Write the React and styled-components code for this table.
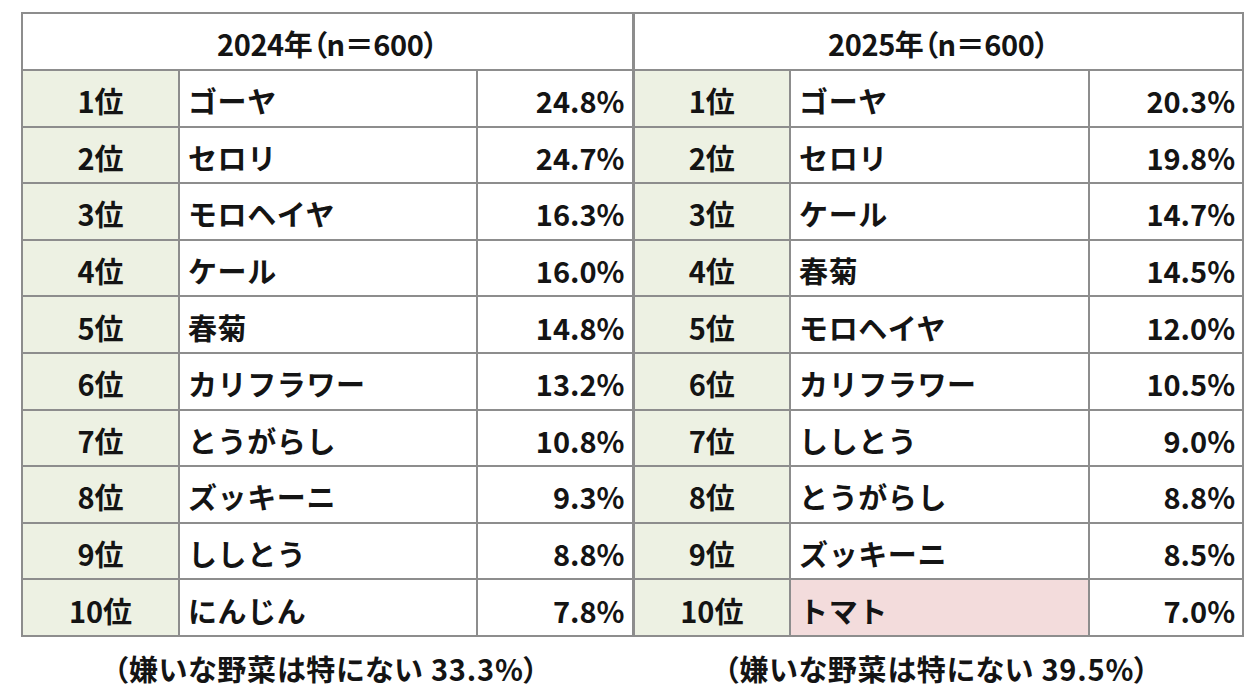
import React from "react";
import styled, { createGlobalStyle } from "styled-components";

const Global = createGlobalStyle`
  html, body { margin: 0; padding: 0; background: #ffffff; }
  body { font-family: "Noto Sans CJK JP", "Noto Sans", sans-serif; color: #141414; }
`;

const Page = styled.div`
  padding: 12px 0 0 21px;
  width: 1221px;
`;

const Table = styled.table`
  border-collapse: collapse;
  table-layout: fixed;
  width: 1221px;
  font-size: 29px;
  font-weight: 700;
  line-height: 1;
  font-feature-settings: "palt";
`;

const HeadCell = styled.th`
  height: 51px;
  padding: 4px 0 0;
  border: 2px solid #8d8d8d;
  border-left-width: ${(p) => (p.$divider ? "3px" : "2px")};
  font-weight: 700;
  text-align: center;
  letter-spacing: -0.4px;
  background: #ffffff;
`;

const Cell = styled.td`
  height: 49.6px;
  padding: 5px ${(p) => (p.$align === "right" ? "7px" : "0")} 0 ${(p) => (p.$align === "left" ? "8px" : "0")};
  border: 2px solid #8d8d8d;
  border-left-width: ${(p) => (p.$divider ? "3px" : "2px")};
  text-align: ${(p) => p.$align};
  background: ${(p) => p.$bg};
  white-space: nowrap;
`;

const Name = styled.span`
  font-feature-settings: normal;
  letter-spacing: 0.6px;
`;

const Footer = styled.div`
  display: flex;
  margin-top: 13px;
`;

const Note = styled.div`
  width: 611px;
  text-align: center;
  font-size: 29px;
  font-weight: 700;
  line-height: 36px;
  letter-spacing: 0.8px;
  font-feature-settings: "palt";
`;

const y2024 = [
  ["ゴーヤ", "24.8%"],
  ["セロリ", "24.7%"],
  ["モロヘイヤ", "16.3%"],
  ["ケール", "16.0%"],
  ["春菊", "14.8%"],
  ["カリフラワー", "13.2%"],
  ["とうがらし", "10.8%"],
  ["ズッキーニ", "9.3%"],
  ["ししとう", "8.8%"],
  ["にんじん", "7.8%"],
];

const y2025 = [
  ["ゴーヤ", "20.3%"],
  ["セロリ", "19.8%"],
  ["ケール", "14.7%"],
  ["春菊", "14.5%"],
  ["モロヘイヤ", "12.0%"],
  ["カリフラワー", "10.5%"],
  ["ししとう", "9.0%"],
  ["とうがらし", "8.8%"],
  ["ズッキーニ", "8.5%"],
  ["トマト", "7.0%", true],
];

const GREEN = "#edf1e3";
const PINK = "#f3dcdc";
const WHITE = "#ffffff";

export default function App() {
  return (
    <>
      <Global />
      <Page>
        <Table>
          <colgroup>
            <col style={{ width: 157 }} />
            <col style={{ width: 298 }} />
            <col style={{ width: 156 }} />
            <col style={{ width: 157 }} />
            <col style={{ width: 299 }} />
            <col style={{ width: 154 }} />
          </colgroup>
          <thead>
            <tr>
              <HeadCell colSpan={3}>2024年（n＝600）</HeadCell>
              <HeadCell colSpan={3} $divider>2025年（n＝600）</HeadCell>
            </tr>
          </thead>
          <tbody>
            {y2024.map((a, i) => {
              const b = y2025[i];
              return (
                <tr key={i}>
                  <Cell $align="center" $bg={GREEN}>{i + 1}位</Cell>
                  <Cell $align="left" $bg={WHITE}><Name>{a[0]}</Name></Cell>
                  <Cell $align="right" $bg={WHITE}>{a[1]}</Cell>
                  <Cell $align="center" $bg={GREEN} $divider>{i + 1}位</Cell>
                  <Cell $align="left" $bg={b[2] ? PINK : WHITE}><Name>{b[0]}</Name></Cell>
                  <Cell $align="right" $bg={WHITE}>{b[1]}</Cell>
                </tr>
              );
            })}
          </tbody>
        </Table>
        <Footer>
          <Note>（嫌いな野菜は特にない 33.3%）</Note>
          <Note>（嫌いな野菜は特にない 39.5%）</Note>
        </Footer>
      </Page>
    </>
  );
}
